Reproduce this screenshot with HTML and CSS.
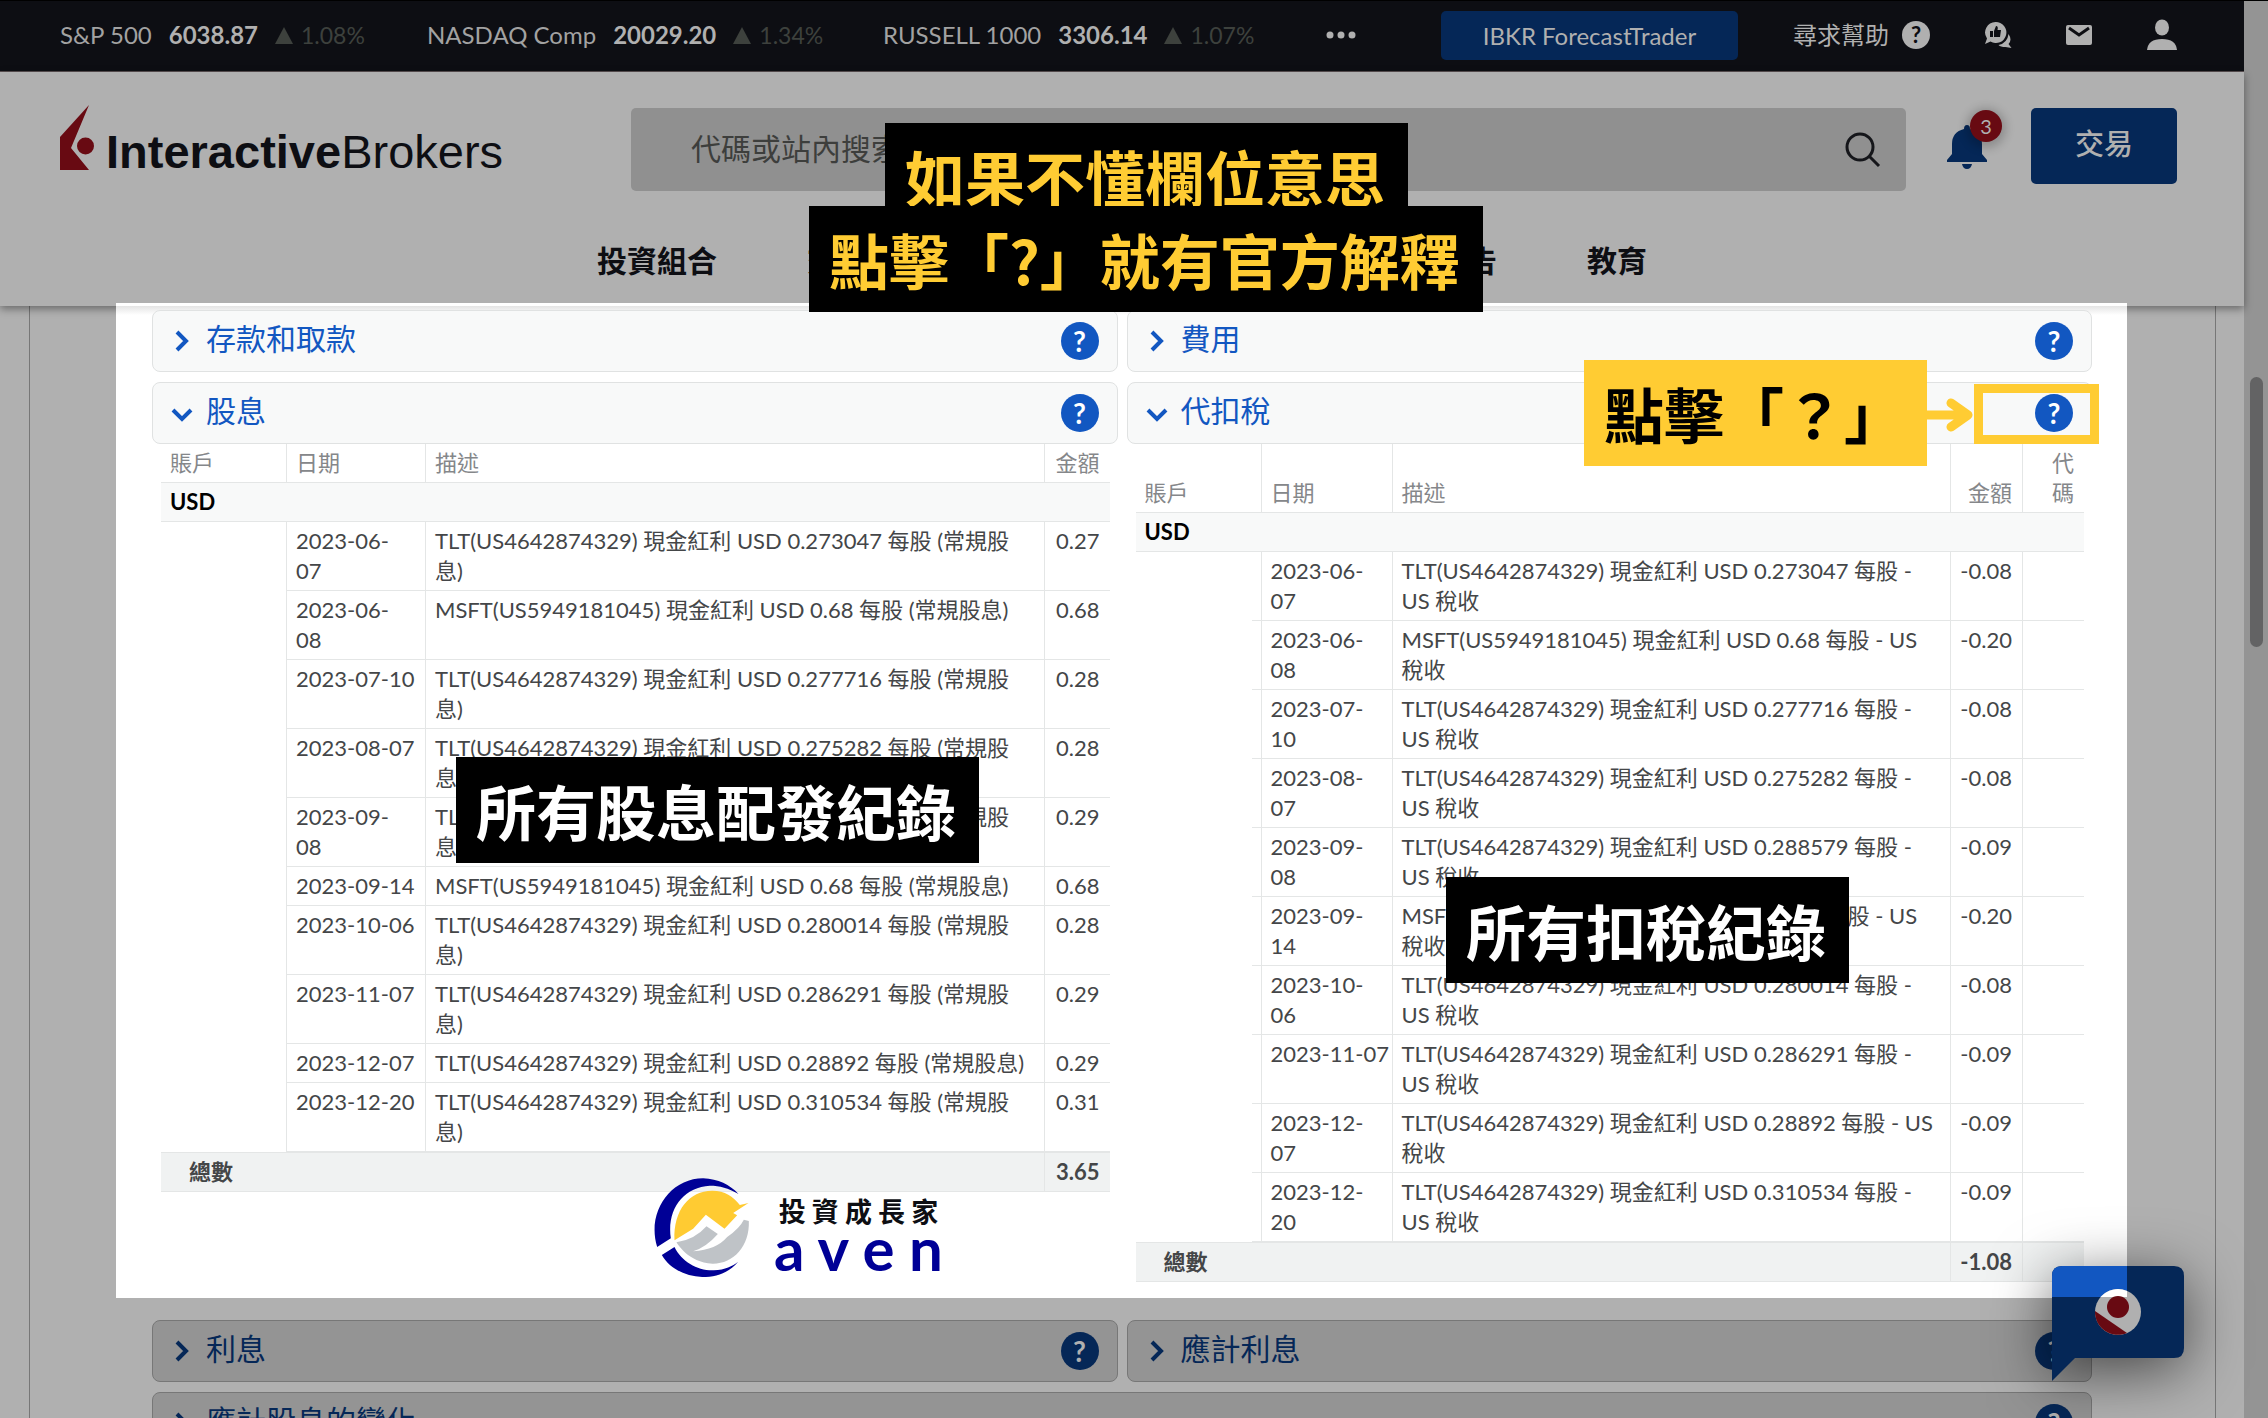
FILE: index.html
```html
<!DOCTYPE html>
<html lang="zh-Hant">
<head>
<meta charset="utf-8">
<title>Interactive Brokers</title>
<link rel="stylesheet" href="styles.css">
</head>
<body>
<svg width="0" height="0" class="defs" aria-hidden="true">
  <symbol id="right" viewBox="0 0 22 22"><path d="M6 2l9 9-9 9" fill="none" stroke="currentColor" stroke-width="4"/></symbol>
  <symbol id="down" viewBox="0 0 22 22"><path d="M2 8l9 9 9-9" fill="none" stroke="currentColor" stroke-width="4"/></symbol>
</svg>
<div class="page">
  <div class="main">
    <div class="topbar">
      <div class="quotes">
        <div class="quote"><span>S&amp;P 500</span><b>6038.87</b><span class="change"><i class="up"></i>1.08%</span></div>
        <div class="quote"><span>NASDAQ Comp</span><b>20029.20</b><span class="change"><i class="up"></i>1.34%</span></div>
        <div class="quote"><span>RUSSELL 1000</span><b>3306.14</b><span class="change"><i class="up"></i>1.07%</span></div>
        <button class="more" aria-label="More"><svg width="30" height="8" viewBox="0 0 30 8"><g fill="#b0b0b0"><circle cx="4" cy="4" r="3.5"/><circle cx="15" cy="4" r="3.5"/><circle cx="26" cy="4" r="3.5"/></g></svg></button>
      </div>
      <a class="forecast" href="#">IBKR ForecastTrader</a>
      <div class="tools">
        <a class="support" href="#">尋求幫助<span class="support-mark">?</span></a>
        <a href="#" aria-label="Feedback"><svg width="28" height="28" viewBox="0 0 28 28"><path d="M11.500 1a10.500 10.500 0 1 1-5 19.500L1 23l2-5.500A10.500 10.500 0 0 1 11.500 1z" fill="#b0b0b0"/><path d="M24.500 13q4 6 0 10l3 4-6-1q-5 0-7-2 9-2 10-11z" fill="#b0b0b0"/><path d="M6 10h3v6H6zM10 10l2-5q2.500 0 1.500 4H17l-1 7h-6z" fill="#0d0e13"/></svg></a>
        <a href="#" aria-label="Messages"><svg width="28" height="22" viewBox="0 0 28 22"><rect x="1" y="1" width="26" height="20" rx="2" fill="#b0b0b0"/><path d="M4 4l10 7 10-7" fill="none" stroke="#0d0e13" stroke-width="3"/></svg></a>
        <a href="#" aria-label="Account"><svg width="30" height="32" viewBox="0 0 30 32"><ellipse cx="15" cy="8.500" rx="7" ry="8" fill="#b0b0b0"/><path d="M0 31q1-11 15-11t15 11z" fill="#b0b0b0"/></svg></a>
      </div>
    </div>

    <header class="header">
      <div class="header-row">
        <a class="logo" href="#">
          <svg width="36" height="66" viewBox="0 0 36 66"><path d="M29 0L0 32v33h29L11 43z" fill="#680a12"/><circle cx="25.500" cy="41" r="8.500" fill="#680a12"/></svg>
          <span class="logo-text"><b>Interactive</b>Brokers</span>
        </a>
        <div class="search">
          <input type="text" placeholder="代碼或站內搜索" aria-label="代碼或站內搜索">
          <svg width="36" height="36" viewBox="0 0 36 36"><circle cx="15" cy="15" r="13" fill="none" stroke="#15161a" stroke-width="3"/><path d="M24 24l10 10" stroke="#15161a" stroke-width="3"/></svg>
        </div>
        <button class="bell" aria-label="Notifications">
          <svg width="40" height="44" viewBox="0 0 40 44"><path d="M20 0q3 0 3 4 12 3 12 15v10l5 6v2H0v-2l5-6V19Q5 7 17 4q0-4 3-4zM15 39h10q-1 5-5 5t-5-5z" fill="#052757"/></svg>
          <span class="badge">3</span>
        </button>
        <button class="trade">交易</button>
      </div>
      <nav class="nav">
        <a href="#">投資組合</a><a href="#">交易</a><a href="#">研究</a><a href="#">轉賬和支付</a><a href="#">業績和報告</a><a href="#">教育</a>
      </nav>
    </header>

    <div class="container">
      <div class="spotlight">
        <section class="column">
          <div class="panel"><button class="toggle"><svg><use href="#right"/></svg>存款和取款</button><button class="help">?</button></div>
          <div class="panel"><button class="toggle"><svg><use href="#down"/></svg>股息</button><button class="help">?</button></div>
          <table class="dividends">
            <colgroup><col class="c-account"><col class="c-date"><col><col class="c-amount"></colgroup>
            <thead><tr><th>賬戶</th><th>日期</th><th>描述</th><th class="num">金額</th></tr></thead>
            <tbody>
              <tr class="currency"><td colspan="4">USD</td></tr>
              <tr><td></td><td>2023-06-<br>07</td><td>TLT(US4642874329) 現金紅利 USD 0.273047 每股 (常規股<br>息)</td><td class="num">0.27</td></tr>
              <tr><td></td><td>2023-06-<br>08</td><td>MSFT(US5949181045) 現金紅利 USD 0.68 每股 (常規股息)</td><td class="num">0.68</td></tr>
              <tr><td></td><td>2023-07-10</td><td>TLT(US4642874329) 現金紅利 USD 0.277716 每股 (常規股<br>息)</td><td class="num">0.28</td></tr>
              <tr><td></td><td>2023-08-07</td><td>TLT(US4642874329) 現金紅利 USD 0.275282 每股 (常規股<br>息)</td><td class="num">0.28</td></tr>
              <tr><td></td><td>2023-09-<br>08</td><td>TLT(US4642874329) 現金紅利 USD 0.288579 每股 (常規股<br>息)</td><td class="num">0.29</td></tr>
              <tr><td></td><td>2023-09-14</td><td>MSFT(US5949181045) 現金紅利 USD 0.68 每股 (常規股息)</td><td class="num">0.68</td></tr>
              <tr><td></td><td>2023-10-06</td><td>TLT(US4642874329) 現金紅利 USD 0.280014 每股 (常規股<br>息)</td><td class="num">0.28</td></tr>
              <tr><td></td><td>2023-11-07</td><td>TLT(US4642874329) 現金紅利 USD 0.286291 每股 (常規股<br>息)</td><td class="num">0.29</td></tr>
              <tr><td></td><td>2023-12-07</td><td>TLT(US4642874329) 現金紅利 USD 0.28892 每股 (常規股息)</td><td class="num">0.29</td></tr>
              <tr><td></td><td>2023-12-20</td><td>TLT(US4642874329) 現金紅利 USD 0.310534 每股 (常規股<br>息)</td><td class="num">0.31</td></tr>
              <tr class="total"><td colspan="3">總數</td><td class="num">3.65</td></tr>
            </tbody>
          </table>
        </section>
        <section class="column">
          <div class="panel"><button class="toggle"><svg><use href="#right"/></svg>費用</button><button class="help">?</button></div>
          <div class="panel"><button class="toggle"><svg><use href="#down"/></svg>代扣稅</button><button class="help">?</button></div>
          <table class="taxes">
            <colgroup><col class="c-account"><col class="c-date"><col><col class="c-amount"><col class="c-code"></colgroup>
            <thead><tr><th>賬戶</th><th>日期</th><th>描述</th><th class="num">金額</th><th class="num">代<br>碼</th></tr></thead>
            <tbody>
              <tr class="currency"><td colspan="5">USD</td></tr>
              <tr><td></td><td>2023-06-<br>07</td><td>TLT(US4642874329) 現金紅利 USD 0.273047 每股 -<br>US 稅收</td><td class="num">-0.08</td><td></td></tr>
              <tr><td></td><td>2023-06-<br>08</td><td>MSFT(US5949181045) 現金紅利 USD 0.68 每股 - US<br>稅收</td><td class="num">-0.20</td><td></td></tr>
              <tr><td></td><td>2023-07-<br>10</td><td>TLT(US4642874329) 現金紅利 USD 0.277716 每股 -<br>US 稅收</td><td class="num">-0.08</td><td></td></tr>
              <tr><td></td><td>2023-08-<br>07</td><td>TLT(US4642874329) 現金紅利 USD 0.275282 每股 -<br>US 稅收</td><td class="num">-0.08</td><td></td></tr>
              <tr><td></td><td>2023-09-<br>08</td><td>TLT(US4642874329) 現金紅利 USD 0.288579 每股 -<br>US 稅收</td><td class="num">-0.09</td><td></td></tr>
              <tr><td></td><td>2023-09-<br>14</td><td>MSFT(US5949181045) 現金紅利 USD 0.68 每股 - US<br>稅收</td><td class="num">-0.20</td><td></td></tr>
              <tr><td></td><td>2023-10-<br>06</td><td>TLT(US4642874329) 現金紅利 USD 0.280014 每股 -<br>US 稅收</td><td class="num">-0.08</td><td></td></tr>
              <tr><td></td><td>2023-11-07</td><td>TLT(US4642874329) 現金紅利 USD 0.286291 每股 -<br>US 稅收</td><td class="num">-0.09</td><td></td></tr>
              <tr><td></td><td>2023-12-<br>07</td><td>TLT(US4642874329) 現金紅利 USD 0.28892 每股 - US<br>稅收</td><td class="num">-0.09</td><td></td></tr>
              <tr><td></td><td>2023-12-<br>20</td><td>TLT(US4642874329) 現金紅利 USD 0.310534 每股 -<br>US 稅收</td><td class="num">-0.09</td><td></td></tr>
              <tr class="total"><td colspan="3">總數</td><td class="num">-1.08</td><td></td></tr>
            </tbody>
          </table>
        </section>
      </div>
      <div class="dimmed">
        <div class="panel"><button class="toggle"><svg><use href="#right"/></svg>利息</button><button class="help">?</button></div>
        <div class="panel"><button class="toggle"><svg><use href="#right"/></svg>應計利息</button><button class="help">?</button></div>
        <div class="panel wide"><button class="toggle"><svg><use href="#right"/></svg>應計股息的變化</button><button class="help">?</button></div>
      </div>
    </div>
  </div>
  <div class="scrollbar"><div class="thumb"></div></div>

  <p class="caption caption-top">如果不懂欄位意思</p>
  <p class="caption caption-second">點擊「?」就有官方解釋</p>
  <p class="caption caption-dividends">所有股息配發紀錄</p>
  <p class="caption caption-taxes">所有扣稅紀錄</p>
  <p class="caption caption-click">點擊「？」</p>
  <svg class="arrow" width="50" height="58" viewBox="0 0 50 58"><path d="M0 30h42M26 18l17 12-17 12" fill="none" stroke="#fc3" stroke-width="9" stroke-linejoin="round" stroke-linecap="round"/></svg>
  <div class="marker"></div>

  <div class="brand">
    <svg width="97" height="99" viewBox="40 55 290 297">
      <path d="M52 262C20 160 90 56 190 56c45 2 80 19 106 47-31-18-56-25-86-25C130 82 80 150 93 236z" fill="#000096"/>
      <path d="M66 286l38-24c22 45 70 72 118 70 35-2 55-12 73-26-30 35-65 46-108 46-50-2-98-25-121-66z" fill="#000096"/>
      <path d="M104 242C100 150 150 92 218 93c37 0 62 17 82 43l26-6-46 30 12 7-38 40-56-42-38 42z" fill="#ffcb32"/>
      <path d="M110 248Q165 240 200 200l34 23Q200 262 160 275q70-5 102-43 38-27 50-52l15 4C330 260 280 313 218 312 145 310 110 248 110 248z" fill="#bfc3c7"/>
    </svg>
    <div class="brand-name"><span class="brand-zh">投 資 成 長 家</span><span class="brand-en">a v e n</span></div>
  </div>

  <button class="chat" aria-label="Chat">
    <svg width="132" height="116" viewBox="0 0 132 116">
      <path d="M10 0h112q10 0 10 10v72q0 10-10 10H23L0 115V10Q0 0 10 0z" fill="#052757"/>
      <path d="M10 0h65v31H0V10Q0 0 10 0z" fill="#1257c1"/>
      <circle cx="66" cy="46" r="23" fill="#b0b0b0"/>
      <path d="M48.500 31A23 23 0 0 1 75 25v6z" fill="#fff"/>
      <path d="M43 45l32 22A23 23 0 0 1 43 45z" fill="#680a12"/>
      <circle cx="66" cy="41" r="11" fill="#680a12"/>
    </svg>
  </button>
</div>
</body>
</html>
```
FILE: styles.css
```css
* { box-sizing: border-box; }

body {
  margin: 0;
  background: #b0b0b0;
  font-family: Lato, "Noto Sans CJK TC", sans-serif;
  font-size: 22px;
  line-height: 30px;
  color: #444648;
}

a { color: inherit; text-decoration: none; }
p { margin: 0; }
svg { display: block; flex: none; }
.defs { position: absolute; }

button {
  border: 0;
  padding: 0;
  background: none;
  font: inherit;
  color: inherit;
  cursor: pointer;
}

.page {
  position: relative;
  display: flex;
  height: 100vh;
  overflow: hidden;
  border-top: 1px solid #000;
}

.main { flex: 1; min-width: 0; }

.scrollbar { width: 24px; padding: 376px 5px 0 6px; background: #949494; }
.thumb { height: 270px; border-radius: 7px; background: #636364; }

/* top bar */
.topbar {
  display: flex;
  align-items: center;
  height: 71px;
  padding: 0 67px 2px 60px;
  border-bottom: 1px solid #5a5052;
  background: #0d0e13;
  color: #a2a2a2;
  font-size: 24px;
}
.quotes {
  display: grid;
  grid-template-columns: 367px 456px 443px 115px;
  align-items: center;
}
.quote { display: flex; gap: 17px; white-space: nowrap; }
.quote b { color: #b0b0b0; }
.change { display: flex; align-items: center; gap: 8px; color: #3d413d; font-size: 23px; }
.up {
  border: 9px solid transparent;
  border-top: 0;
  border-bottom: 17px solid #3d413d;
}
.forecast {
  width: 297px;
  border-radius: 5px;
  background: #052757;
  color: #b0b0b0;
  line-height: 49px;
  text-align: center;
}
.tools {
  flex: 1;
  display: flex;
  align-items: center;
  justify-content: space-between;
  padding-left: 55px;
  color: #b0b0b0;
}
.support { display: flex; align-items: center; gap: 13px; }
.support-mark {
  width: 28px;
  border-radius: 14px;
  background: #b0b0b0;
  color: #0d0e13;
  font-size: 22px;
  font-weight: bold;
  line-height: 28px;
  text-align: center;
}

/* header */
.header {
  position: relative;
  height: 234px;
  padding: 36px 67px 0 60px;
  background: #b0b0b0;
  box-shadow: 0 3px 8px rgba(0, 0, 0, 0.4);
}
.header-row { display: flex; align-items: flex-start; }
.logo { display: flex; gap: 10px; width: 571px; margin-top: -3px; color: #0d0e13; }
.logo-text {
  padding-top: 23px;
  font-family: "Liberation Sans", sans-serif;
  font-size: 47px;
  line-height: 47px;
}
.search {
  flex: 1;
  display: flex;
  align-items: center;
  height: 83px;
  padding: 0 25px 0 60px;
  border-radius: 5px;
  background: #909090;
}
.search input {
  flex: 1;
  border: 0;
  padding: 0 0 4px;
  background: none;
  font: inherit;
  font-size: 30px;
}
.search input::placeholder { color: #3d3e3c; opacity: 1; }
.bell { position: relative; margin: 17px 44px 0 41px; }
.badge {
  position: absolute;
  top: -15px;
  left: 23px;
  width: 32px;
  border-radius: 16px;
  background: #680a12;
  box-shadow: 0 2px 10px 4px rgba(0, 0, 0, 0.2);
  color: #b0b0b0;
  font-size: 20px;
  line-height: 32px;
}
.trade {
  width: 146px;
  height: 76px;
  padding-bottom: 4px;
  border-radius: 5px;
  background: #052757;
  color: #b0b0b0;
  font-size: 29px;
  font-weight: 500;
}
.nav {
  display: flex;
  justify-content: center;
  gap: 90px;
  margin: 49px -7px 0 0;
  color: #0d0e13;
  font-size: 30px;
  font-weight: bold;
  line-height: 40px;
}

/* statement */
.container {
  margin: 0 28px 0 29px;
  border: solid #777;
  border-width: 0 1px;
}
.spotlight {
  position: relative;
  display: grid;
  grid-template-columns: 1fr 1fr;
  gap: 9px;
  margin: -3px 88px 0 86px;
  padding: 7px 35px 16px 36px;
  background: linear-gradient(#fff 3px, #e4e4e4 3px, #fff 12px);
}
.panel {
  display: flex;
  align-items: center;
  height: 62px;
  padding: 0 18px;
  margin-bottom: 10px;
  border: 1px solid #e0e2e2;
  border-radius: 8px;
  background: #f8f9f9;
  color: #1257c1;
}
.toggle {
  flex: 1;
  display: flex;
  align-items: center;
  gap: 13px;
  font-size: 30px;
  line-height: 54px;
  padding-bottom: 6px;
  text-align: left;
}
.toggle svg { width: 22px; height: 22px; margin-top: 6px; }
.help {
  width: 38px;
  border-radius: 19px;
  background: #1257c1;
  color: #fff;
  font-size: 28px;
  font-weight: bold;
  line-height: 38px;
}

table {
  width: calc(100% - 17px);
  margin: -10px 0 0 9px;
  table-layout: fixed;
  border-spacing: 0;
}
.c-account { width: 126px; }
.dividends .c-date { width: 139px; }
.dividends .c-amount { width: 65px; }
.taxes .c-date { width: 131px; }
.taxes .c-amount { width: 72px; }
.taxes .c-code { width: 61px; }

th, td {
  padding: 4px 10px 4px 9px;
  border: solid #e4e6e6;
  border-width: 0 1px 1px 0;
  text-align: left;
  vertical-align: top;
  white-space: nowrap;
}
th { color: #85878a; font-weight: normal; vertical-align: bottom; }
th:last-child, td:last-child { border-right: 0; }
td:first-child { border-bottom: 0; }
.taxes td:first-child {
  background: linear-gradient(#e4e6e6, #e4e6e6) right bottom / 9px 1px no-repeat;
}
.num { text-align: right; }
.currency td:first-child {
  border-bottom: 1px solid #e4e6e6;
  background: #f8f9f9;
  color: #000;
  font-weight: bold;
}
.total td, .total td:first-child {
  border-top: 1px solid #e4e6e6;
  border-bottom: 1px solid #e4e6e6;
  background: #f0f2f2;
  font-weight: bold;
}
.total td:first-child { padding-left: 28px; }

.dimmed {
  display: grid;
  grid-template-columns: 1fr 1fr;
  gap: 10px 9px;
  margin: 22px 123px 0 122px;
}
.dimmed .panel {
  margin: 0;
  border-color: #777;
  background: #949494;
  color: #052757;
}
.dimmed .help { background: #052757; color: #b0b0b0; }
.wide { grid-column: 1 / -1; }

/* annotations lying over the page */
.caption {
  position: absolute;
  padding: 0 23px 0 20px;
  background: #000;
  color: #fff;
  font-family: "Noto Sans CJK TC", sans-serif;
  font-size: 60px;
  font-weight: bold;
  line-height: 106px;
  white-space: nowrap;
}
.caption-top { left: 885px; top: 122px; color: #fc3; }
.caption-second { left: 809px; top: 205px; color: #fc3; }
.caption-dividends { left: 456px; top: 756px; }
.caption-taxes { left: 1446px; top: 876px; }
.caption-click { left: 1584px; top: 359px; background: #fc3; color: #000; }
.arrow { position: absolute; left: 1925px; top: 384px; }
.marker {
  position: absolute;
  left: 1974px;
  top: 383px;
  width: 125px;
  height: 60px;
  border: 9px solid #fc3;
}

.brand {
  position: absolute;
  left: 653px;
  top: 1177px;
  display: flex;
  gap: 24px;
}
.brand-name { display: flex; flex-direction: column; align-items: center; padding-top: 18px; }
.brand-zh { color: #0d0e13; font-family: "Noto Sans CJK TC", sans-serif; font-size: 27px; font-weight: bold; }
.brand-en { color: #000096; font-size: 60px; line-height: 44px; font-weight: bold; }

.chat {
  position: absolute;
  right: 84px;
  bottom: 36px;
  filter: drop-shadow(0 12px 30px rgba(0, 0, 0, 0.6));
}
```
